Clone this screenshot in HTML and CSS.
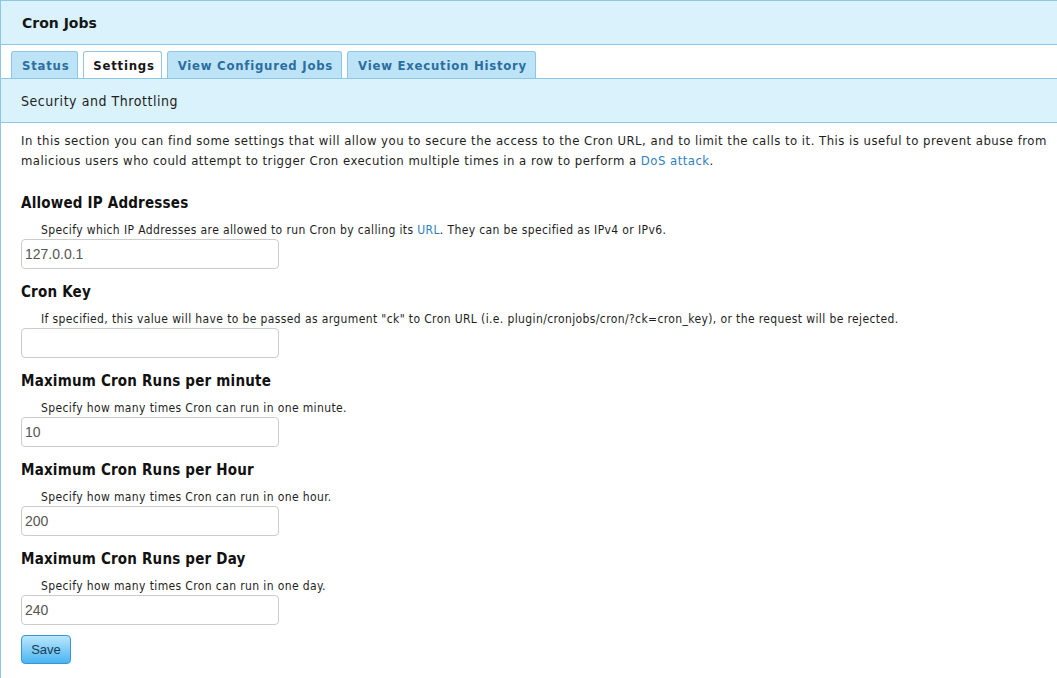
FILE: index.html
```html
<!DOCTYPE html>
<html>
<head>
<meta charset="utf-8">
<title>Cron Jobs</title>
<link rel="stylesheet" href="styles.css">
</head>
<body>
<div class="panel">
  <div class="header"><h1 class="title">Cron Jobs</h1></div>
  <ul class="tabs">
    <li class="tab">Status</li>
    <li class="tab active">Settings</li>
    <li class="tab">View Configured Jobs</li>
    <li class="tab">View Execution History</li>
  </ul>
  <div class="subheader">Security and Throttling</div>
  <div class="content">
    <p class="intro">In this section you can find some settings that will allow you to secure the access to the Cron URL, and to limit the calls to it. This is useful to prevent abuse from malicious users who could attempt to trigger Cron execution multiple times in a row to perform a <a class="link" href="#">DoS attack</a>.</p>

    <div class="field first">
      <h3 class="label">Allowed IP Addresses</h3>
      <div class="desc">Specify which IP Addresses are allowed to run Cron by calling its <a class="link" href="#">URL</a>. They can be specified as IPv4 or IPv6.</div>
      <input class="input" type="text" value="127.0.0.1">
    </div>

    <div class="field">
      <h3 class="label">Cron Key</h3>
      <div class="desc">If specified, this value will have to be passed as argument "ck" to Cron URL (i.e. plugin/cronjobs/cron/?ck=cron_key), or the request will be rejected.</div>
      <input class="input" type="text" value="">
    </div>

    <div class="field">
      <h3 class="label">Maximum Cron Runs per minute</h3>
      <div class="desc">Specify how many times Cron can run in one minute.</div>
      <input class="input" type="text" value="10">
    </div>

    <div class="field">
      <h3 class="label">Maximum Cron Runs per Hour</h3>
      <div class="desc">Specify how many times Cron can run in one hour.</div>
      <input class="input" type="text" value="200">
    </div>

    <div class="field">
      <h3 class="label">Maximum Cron Runs per Day</h3>
      <div class="desc">Specify how many times Cron can run in one day.</div>
      <input class="input" type="text" value="240">
    </div>

    <button class="save" type="button">Save</button>
  </div>
</div>
</body>
</html>
```

FILE: styles.css
```css
html, body {
  margin: 0;
  padding: 0;
  background: #ffffff;
}

body {
  font-family: "DejaVu Sans Condensed", "DejaVu Sans", sans-serif;
  color: #1e1e1e;
  overflow: hidden;
}

.panel {
  border-left: 1px solid #8ec6e6;
  min-height: 678px;
  box-sizing: border-box;
}

.header {
  background: #daf2fc;
  border-top: 1px solid #8ec6e6;
  border-bottom: 1px solid #8ec6e6;
  height: 43px;
  display: flex;
  align-items: center;
  padding-left: 21px;
}

.title {
  margin: 0;
  font-family: "DejaVu Sans", sans-serif;
  font-size: 14px;
  font-weight: bold;
  color: #161616;
}

.tabs {
  list-style: none;
  margin: 0;
  padding: 6px 0 0 10px;
  display: flex;
  gap: 5px;
  background: #ffffff;
  height: 27px;
}

.tab {
  height: 27px;
  box-sizing: border-box;
  border: 1px solid #8ec6e6;
  border-bottom: none;
  border-radius: 3px 3px 0 0;
  background: #bde3f7;
  color: #2b6e9f;
  font-size: 13px;
  font-weight: bold;
  letter-spacing: 0.76px;
  padding: 1px 8px 0 10px;
  display: flex;
  align-items: center;
}

.tab.active {
  background: #ffffff;
  color: #161616;
  padding: 1px 6px 0 9px;
}

.subheader {
  background: #daf2fc;
  border-top: 1px solid #8ec6e6;
  border-bottom: 1px solid #8ec6e6;
  height: 43px;
  display: flex;
  align-items: center;
  padding-left: 20px;
  font-size: 14px;
  letter-spacing: 0.55px;
  color: #1e1e1e;
}

.content {
  padding: 8px 8px 20px 20px;
}

.intro {
  margin: 0;
  font-size: 13px;
  line-height: 20px;
  letter-spacing: 0.48px;
}

.link {
  color: #2f7fc0;
  text-decoration: none;
}

.field {
  margin-top: 14px;
}

.field.first {
  margin-top: 23px;
}

.label {
  margin: 0;
  font-size: 15px;
  line-height: 18px;
  font-weight: bold;
  letter-spacing: 0.2px;
  color: #111111;
}

.desc {
  margin-top: 10px;
  margin-bottom: 1px;
  padding-left: 20px;
  font-size: 12px;
  line-height: 16px;
  letter-spacing: 0.38px;
}

.input {
  display: block;
  box-sizing: border-box;
  width: 258px;
  height: 30px;
  margin: 0;
  border: 1px solid #cccccc;
  border-radius: 4px;
  padding: 0 3px;
  font-family: "Liberation Sans", Arial, sans-serif;
  font-size: 14px;
  color: #555555;
  background: #ffffff;
}

.save {
  margin-top: 10px;
  width: 50px;
  height: 29px;
  box-sizing: border-box;
  border: 1px solid #3a94d6;
  border-radius: 4px;
  background: linear-gradient(#b9e7fd, #4ab5f1);
  font-family: "Liberation Sans", Arial, sans-serif;
  font-size: 13px;
  color: #1c3b57;
  padding: 0;
}
```
